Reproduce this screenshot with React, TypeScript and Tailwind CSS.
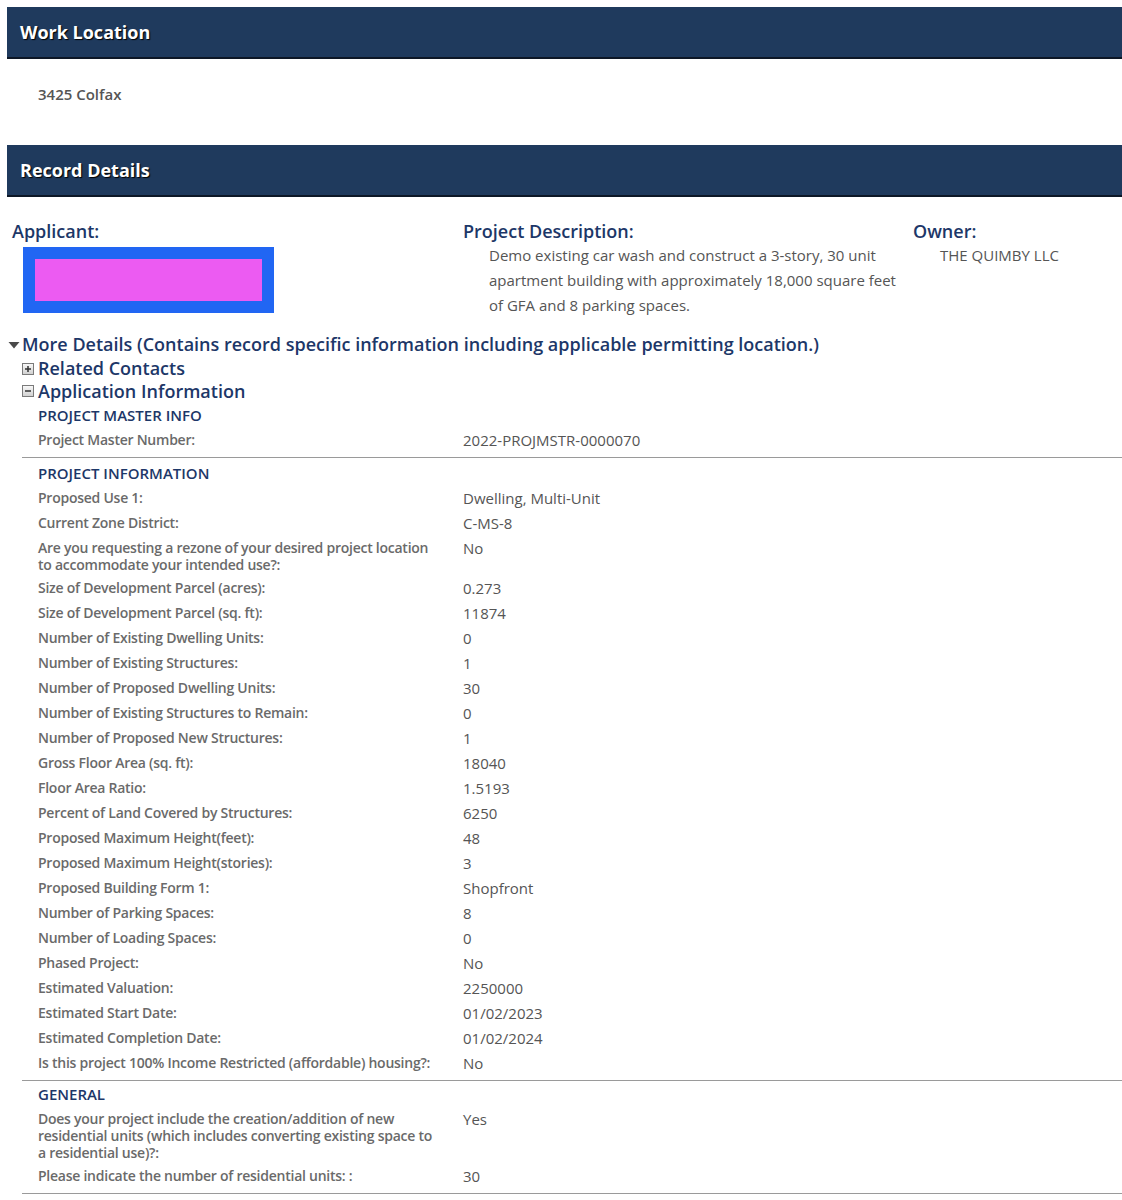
import React from 'react';

type Row = { label: string; value: string };

const masterInfo: Row[] = [{ label: 'Project Master Number:', value: '2022-PROJMSTR-0000070' }];

const projectInfo: Row[] = [
  { label: 'Proposed Use 1:', value: 'Dwelling, Multi-Unit' },
  { label: 'Current Zone District:', value: 'C-MS-8' },
  {
    label: 'Are you requesting a rezone of your desired project location to accommodate your intended use?:',
    value: 'No',
  },
  { label: 'Size of Development Parcel (acres):', value: '0.273' },
  { label: 'Size of Development Parcel (sq. ft):', value: '11874' },
  { label: 'Number of Existing Dwelling Units:', value: '0' },
  { label: 'Number of Existing Structures:', value: '1' },
  { label: 'Number of Proposed Dwelling Units:', value: '30' },
  { label: 'Number of Existing Structures to Remain:', value: '0' },
  { label: 'Number of Proposed New Structures:', value: '1' },
  { label: 'Gross Floor Area (sq. ft):', value: '18040' },
  { label: 'Floor Area Ratio:', value: '1.5193' },
  { label: 'Percent of Land Covered by Structures:', value: '6250' },
  { label: 'Proposed Maximum Height(feet):', value: '48' },
  { label: 'Proposed Maximum Height(stories):', value: '3' },
  { label: 'Proposed Building Form 1:', value: 'Shopfront' },
  { label: 'Number of Parking Spaces:', value: '8' },
  { label: 'Number of Loading Spaces:', value: '0' },
  { label: 'Phased Project:', value: 'No' },
  { label: 'Estimated Valuation:', value: '2250000' },
  { label: 'Estimated Start Date:', value: '01/02/2023' },
  { label: 'Estimated Completion Date:', value: '01/02/2024' },
  { label: 'Is this project 100% Income Restricted (affordable) housing?:', value: 'No' },
];

const general: Row[] = [
  {
    label:
      'Does your project include the creation/addition of new residential units (which includes converting existing space to a residential use)?:',
    value: 'Yes',
  },
  { label: 'Please indicate the number of residential units: :', value: '30' },
];

function SectionBar({ title }: { title: string }) {
  return (
    <div className="flex h-[52px] items-center border-b-2 border-[#0d1726] bg-[#1f3a5d] pl-[13px]">
      <h2 className="text-[18px] font-bold text-white [text-shadow:1px_1px_1px_#000]">{title}</h2>
    </div>
  );
}

function ToggleBox({ open }: { open: boolean }) {
  return (
    <svg width="12" height="12" viewBox="0 0 12 12" className="mr-[4px] shrink-0">
      <defs>
        <linearGradient id={open ? 'gO' : 'gC'} x1="0" y1="0" x2="0" y2="1">
          <stop offset="0" stopColor="#fafafa" />
          <stop offset="1" stopColor="#cfcfcf" />
        </linearGradient>
      </defs>
      <rect x="0.5" y="0.5" width="11" height="11" fill={`url(#${open ? 'gO' : 'gC'})`} stroke="#7a7a7a" />
      <rect x="3" y="5.25" width="6" height="1.5" fill="#333" />
      {!open && <rect x="5.25" y="3" width="1.5" height="6" fill="#333" />}
    </svg>
  );
}

function Section({ title, rows }: { title: string; rows: Row[] }) {
  return (
    <div className="border-b border-[#9a9a9a] pb-[4px] pl-[16px]">
      <div className="pt-[5px] pb-[3px] text-[15px] font-semibold leading-[20px] text-[#1d3768]">{title}</div>
      {rows.map((r) => (
        <div key={r.label} className="flex py-[3px]">
          <div className="mr-[25px] w-[400px] shrink-0 text-[14px] font-semibold leading-[17px] tracking-[-0.25px] text-[#6a6a6a]">
            {r.label}
          </div>
          <div className="text-[15px] leading-[19px] text-[#555]">{r.value}</div>
        </div>
      ))}
    </div>
  );
}

export default function App() {
  return (
    <div className="min-h-[1200px] bg-white pl-[7px] pt-[7px] font-['Open_Sans','Lato',sans-serif]">
      <SectionBar title="Work Location" />
      <div className="pl-[31px] pt-[25px] pb-[41px] text-[15px] font-semibold leading-[20px] text-[#555]">
        3425 Colfax
      </div>

      <SectionBar title="Record Details" />

      {/* applicant / description / owner */}
      <div className="flex pt-[22px] pl-[5px]">
        <div className="w-[451px] shrink-0">
          <div className="text-[18px] font-semibold leading-[24px] text-[#1d3768]">Applicant:</div>
          <div className="ml-[11px] mt-[4px] h-[66px] w-[251px] border-[12px] border-[#2166f3] bg-[#ec5bf2]" />
        </div>
        <div className="w-[450px] shrink-0">
          <div className="text-[18px] font-semibold leading-[24px] text-[#1d3768]">Project Description:</div>
          <p className="box-content w-[424px] pl-[26px] text-[15px] leading-[25px] text-[#555]">
            Demo existing car wash and construct a 3-story, 30 unit apartment building with approximately 18,000
            square feet of GFA and 8 parking spaces.
          </p>
        </div>
        <div className="flex-1">
          <div className="text-[18px] font-semibold leading-[24px] text-[#1d3768]">Owner:</div>
          <div className="pl-[27px] text-[15px] leading-[25px] text-[#555]">THE QUIMBY LLC</div>
        </div>
      </div>

      {/* More details */}
      <div className="mt-[14px]">
        <div className="flex h-[25px] items-center text-[18px] font-semibold text-[#1d3768]">
          <svg width="14" height="10" viewBox="0 0 14 10" className="mr-[1px] shrink-0">
            <path d="M1.5 2 L12.5 2 L7 8.5 Z" fill="#4a4a4a" />
          </svg>
          More Details (Contains record specific information including applicable permitting location.)
        </div>
        <div className="pl-[15px]">
          <div className="flex h-[23px] items-center text-[18px] font-semibold text-[#1d3768]">
            <ToggleBox open={false} />
            Related Contacts
          </div>
          <div className="flex h-[22px] items-center text-[18px] font-semibold text-[#1d3768]">
            <ToggleBox open={true} />
            Application Information
          </div>

          <div className="-mt-[2px]">
            <Section title="PROJECT MASTER INFO" rows={masterInfo} />
          </div>
          <Section title="PROJECT INFORMATION" rows={projectInfo} />
          <div className="-mt-[2px]">
            <Section title="GENERAL" rows={general} />
          </div>
        </div>
      </div>
    </div>
  );
}
